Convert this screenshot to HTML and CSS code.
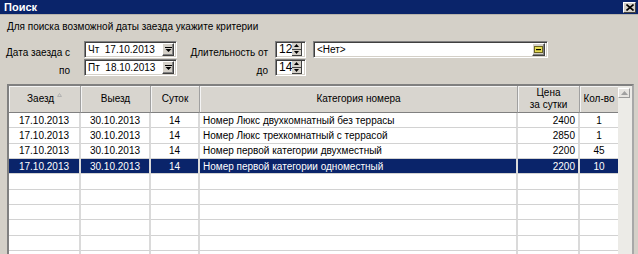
FILE: index.html
```html
<!DOCTYPE html>
<html lang="ru">
<head>
<meta charset="utf-8">
<title>Поиск</title>
<link rel="stylesheet" href="styles.css">
</head>
<body>
<div class="window">
  <!-- window caption -->
  <div class="titlebar">
    <span class="title">Поиск</span>
    <span class="close">
      <svg width="8" height="7" viewBox="0 0 8 7"><path d="M0.5 0.5 L7.5 6.5 M7.5 0.5 L0.5 6.5" stroke="#000" stroke-width="1.6"/></svg>
    </span>
  </div>

  <p class="hint">Для поиска возможной даты заезда укажите критерии</p>

  <!-- search criteria -->
  <div class="criteria">
    <label class="lbl wide">Дата заезда с</label>
    <div class="field date">
      <span class="val">Чт&nbsp;&nbsp;17.10.2013</span>
      <span class="btn drop"><svg width="7" height="5" viewBox="0 0 7 5"><rect x="0" y="0" width="7" height="1" fill="#000"/><path d="M0.5 2 H6.5 L3.5 5 Z" fill="#000"/></svg></span>
    </div>
    <label class="lbl">Длительность от</label>
    <div class="field spin">
      <span class="val">12</span>
      <span class="spinbtns">
        <span class="btn half"><svg width="5" height="3" viewBox="0 0 5 3"><path d="M2.5 0 L5 3 H0 Z" fill="#000"/></svg></span>
        <span class="btn half"><svg width="5" height="3" viewBox="0 0 5 3"><path d="M0 0 H5 L2.5 3 Z" fill="#000"/></svg></span>
      </span>
    </div>
    <div class="gap"></div>
    <div class="field combo">
      <span class="val">&lt;Нет&gt;</span>
      <span class="btn lookup"><svg width="9" height="7" viewBox="0 0 9 7"><rect x="0.5" y="0.5" width="8" height="6" fill="#e6dc52" stroke="#6b6420"/><rect x="2" y="3" width="5" height="1.2" fill="#000"/></svg></span>
    </div>

    <label class="lbl wide">по</label>
    <div class="field date">
      <span class="val">Пт&nbsp;&nbsp;18.10.2013</span>
      <span class="btn drop"><svg width="7" height="5" viewBox="0 0 7 5"><rect x="0" y="0" width="7" height="1" fill="#000"/><path d="M0.5 2 H6.5 L3.5 5 Z" fill="#000"/></svg></span>
    </div>
    <label class="lbl">до</label>
    <div class="field spin">
      <span class="val">14</span>
      <span class="spinbtns">
        <span class="btn half"><svg width="5" height="3" viewBox="0 0 5 3"><path d="M2.5 0 L5 3 H0 Z" fill="#000"/></svg></span>
        <span class="btn half"><svg width="5" height="3" viewBox="0 0 5 3"><path d="M0 0 H5 L2.5 3 Z" fill="#000"/></svg></span>
      </span>
    </div>
  </div>

  <!-- results grid -->
  <div class="grid">
    <div class="grid-body">
      <table>
        <colgroup>
          <col style="width:72px"><col style="width:70px"><col style="width:49px">
          <col style="width:318px"><col style="width:62px"><col style="width:38px">
        </colgroup>
        <thead>
          <tr>
            <th>Заезд <svg class="sort" width="5" height="4" viewBox="0 0 5 4"><path d="M2.5 0.5 L4.5 3.5 H0.5 Z" fill="none" stroke="#b0b0b0"/></svg></th>
            <th>Выезд</th>
            <th>Суток</th>
            <th>Категория номера</th>
            <th>Цена<br>за сутки</th>
            <th>Кол-во</th>
          </tr>
        </thead>
        <tbody>
          <tr>
            <td class="c">17.10.2013</td><td class="c">30.10.2013</td><td class="c">14</td>
            <td>Номер Люкс двухкомнатный без террасы</td><td class="r">2400</td><td class="c">1</td>
          </tr>
          <tr>
            <td class="c">17.10.2013</td><td class="c">30.10.2013</td><td class="c">14</td>
            <td>Номер Люкс трехкомнатный с террасой</td><td class="r">2850</td><td class="c">1</td>
          </tr>
          <tr>
            <td class="c">17.10.2013</td><td class="c">30.10.2013</td><td class="c">14</td>
            <td>Номер первой категории двухместный</td><td class="r">2200</td><td class="c">45</td>
          </tr>
          <tr class="selected">
            <td class="c">17.10.2013</td><td class="c">30.10.2013</td><td class="c">14</td>
            <td>Номер первой категории одноместный</td><td class="r">2200</td><td class="c">10</td>
          </tr>
          <tr><td></td><td></td><td></td><td></td><td></td><td></td></tr>
          <tr><td></td><td></td><td></td><td></td><td></td><td></td></tr>
          <tr><td></td><td></td><td></td><td></td><td></td><td></td></tr>
          <tr><td></td><td></td><td></td><td></td><td></td><td></td></tr>
          <tr><td></td><td></td><td></td><td></td><td></td><td></td></tr>
          <tr><td></td><td></td><td></td><td></td><td></td><td></td></tr>
        </tbody>
      </table>
    </div>
    <div class="vscroll">
      <span class="up"><svg width="7" height="4" viewBox="0 0 7 4"><path d="M3.5 0 L7 4 H0 Z" fill="#a0a0a0"/></svg></span>
    </div>
  </div>
</div>
</body>
</html>
```

FILE: styles.css
```css
/* Classic Windows dialog look */
body {
  margin: 0;
  background-color: #d4d0c8;
  font-family: "Liberation Sans", Arial, sans-serif;
  font-size: 10px;
  color: #000;
}

.window {
  width: 638px;
  height: 254px;
  overflow: hidden;
  background-color: #d4d0c8;
}

.titlebar {
  height: 14px;
  background-color: #0a246a;
  display: flex;
  align-items: center;
  justify-content: space-between;
  padding: 0 2px 0 4px;
  border-bottom: 1px solid #b8b4ac;
}
.title {
  color: #fff;
  font-weight: bold;
  font-size: 11px;
}
.close {
  width: 11px;
  height: 9px;
  display: flex;
  align-items: center;
  justify-content: center;
  background-color: #d4d0c8;
  border: 1px solid;
  border-color: #fff #404040 #404040 #fff;
}

.hint {
  margin: 6px 0 0 7px;
  line-height: 12px;
}

/* criteria form */
.criteria {
  margin: 8px 0 0 0;
  display: grid;
  grid-template-columns: 84px 93px 98px 31px 7px 235px;
  grid-template-rows: 17px 17px;
  row-gap: 1px;
}
.lbl {
  text-align: right;
  white-space: nowrap;
  padding-right: 7px;
  line-height: 12px;
  margin-bottom: -1px;
  align-self: end;
}
.lbl.wide {
  padding-right: 14px;
}
.field {
  background-color: #fff;
  border: 1px solid;
  border-color: #808080 #fff #fff #808080;
  box-shadow: inset 1px 1px #404040, inset -1px -1px #d4d0c8;
  display: flex;
  align-items: center;
  padding: 2px;
}
.field .val {
  flex: 1;
  line-height: 13px;
  padding-left: 1px;
  white-space: nowrap;
}
.btn {
  display: flex;
  align-items: center;
  justify-content: center;
  background-color: #d4d0c8;
  border: 1px solid;
  border-color: #fff #404040 #404040 #fff;
  box-shadow: inset -1px -1px #808080;
}
.drop {
  width: 10px;
  height: 11px;
}
.spin {
  padding-right: 3px;
}
.spin .val {
  font-size: 12px;
}
.spinbtns {
  display: flex;
  flex-direction: column;
  width: 10px;
  height: 13px;
}
.btn.half {
  flex: 1;
  border-width: 0 1px 1px 0;
  box-shadow: none;
}
.combo {
  grid-column: 6;
}
.lookup {
  width: 11px;
  height: 11px;
}

/* results grid */
.grid {
  margin: 8px 0 0 7px;
  width: 623px;
  height: 180px;
  border: 2px solid;
  border-color: #808080 #a8a8a8 #d4d0c8 #808080;
  display: flex;
  background-color: #fff;
}
.grid-body {
  width: 609px;
  overflow: hidden;
}
table {
  border-collapse: separate;
  border-spacing: 0;
  table-layout: fixed;
  width: 609px;
}
th {
  height: 26px;
  padding: 0;
  font-weight: normal;
  line-height: 12px;
  background-color: #d8d5cf;
  border-right: 1px solid #a0a0a0;
  border-bottom: 1px solid #808080;
  box-shadow: inset 1px 1px #f4f4f4;
}
th:last-child {
  border-right: 0;
}
.sort {
  vertical-align: 5px;
}
td {
  height: 14.33px;
  padding: 0 3px;
  line-height: 13px;
  white-space: nowrap;
  overflow: hidden;
  border-right: 2px solid #dadada;
  border-bottom: 1px solid #d2d2d2;
}
td:last-child {
  border-right: 0;
}
td.c {
  text-align: center;
}
td.r {
  text-align: right;
}
tr.selected td {
  background-color: #0a246a;
  color: #fff;
}

.vscroll {
  width: 14px;
  background-color: #ecebe7;
  padding-top: 2px;
}
.up {
  display: flex;
  align-items: center;
  justify-content: center;
  width: 10px;
  height: 8px;
  background-color: #e6e4e0;
  border: 1px solid;
  border-color: #fff #9a9a9a #9a9a9a #fff;
}
```
